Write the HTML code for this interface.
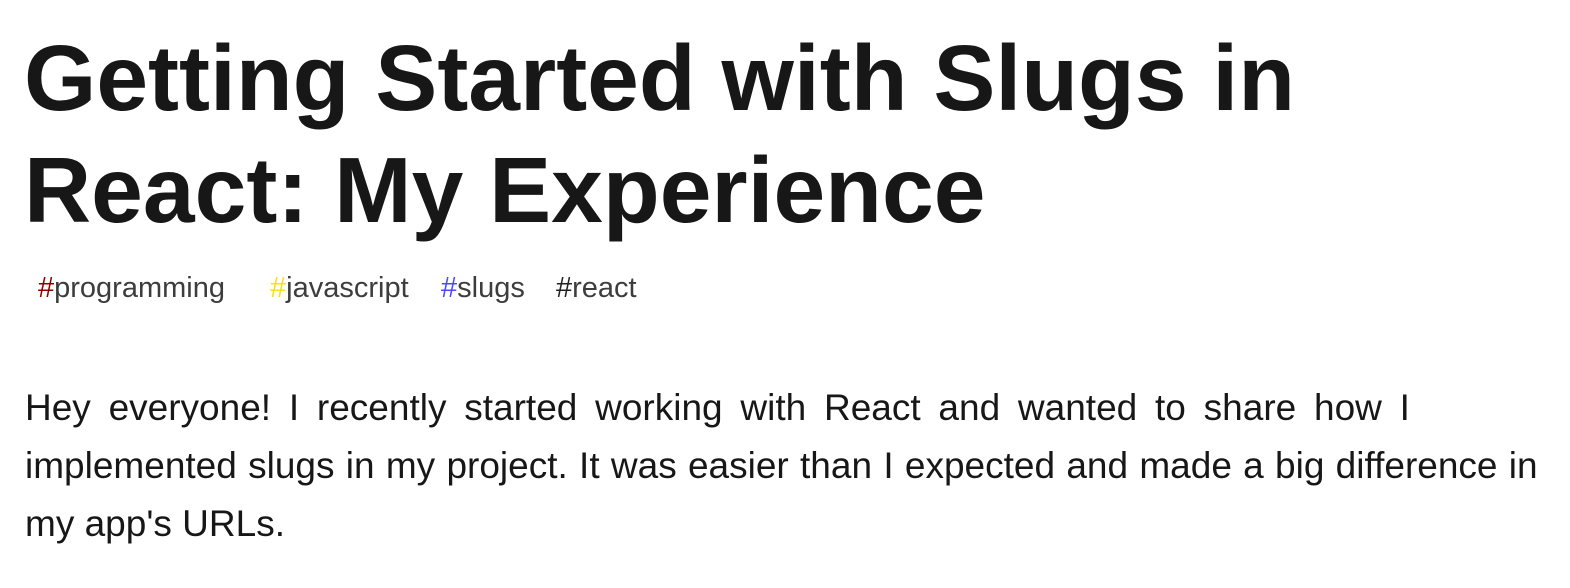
<!DOCTYPE html>
<html><head><meta charset="utf-8"><style>
body{margin:0;background:#fff;width:1570px;height:588px;overflow:hidden;font-family:"Liberation Sans",sans-serif;color:#171717}
h1{position:absolute;left:24px;top:22px;margin:0;font-size:93px;line-height:112px;font-weight:900;white-space:nowrap;color:#171717}
.tags{position:absolute;left:0;top:268px;font-size:29px;line-height:40px;color:#3d3d3d;white-space:nowrap}
.tags span{position:absolute;top:0}
.tags b{font-weight:normal}
p{position:absolute;left:25px;top:379px;margin:0;font-size:37px;line-height:58px;white-space:nowrap;color:#171717}
</style></head><body>
<h1>Getting Started with Slugs in<br>React: My Experience</h1>
<div class="tags"><span style="left:38px"><b style="color:#8c0000">#</b>programming</span><span style="left:270px"><b style="color:#f7df1e">#</b>javascript</span><span style="left:441px"><b style="color:#4a4aff">#</b>slugs</span><span style="left:556px"><b style="color:#222">#</b>react</span></div>
<p><span style="word-spacing:7.5px">Hey everyone! I recently started working with React and wanted to share how I</span><br><span style="word-spacing:1px">implemented slugs in my project. It was easier than I expected and made a big difference in</span><br>my app's URLs.</p>
</body></html>
